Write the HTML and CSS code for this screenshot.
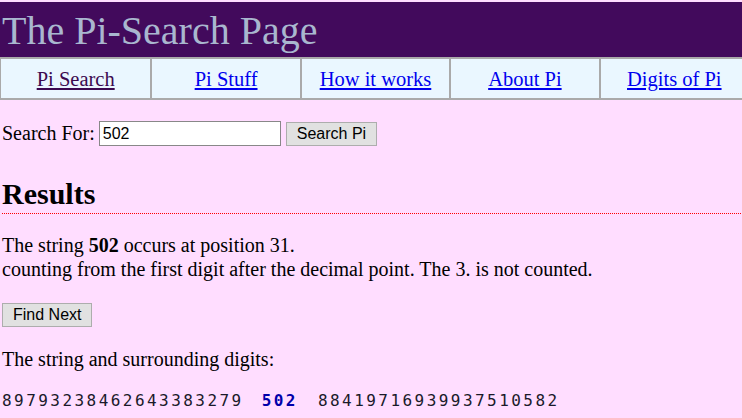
FILE: index.html
```html
<!doctype html>
<html lang="en">
<head>
<meta charset="UTF-8">
<title>The Pi-Search Page</title>
<link rel="stylesheet" href="styles.css">
</head>
<body>

<!-- header -->
<div class="banner">The Pi-Search Page</div>

<!-- nav -->
<div class="navbar">
  <a href="#" class="visited">Pi Search</a>
  <a href="#">Pi Stuff</a>
  <a href="#">How it works</a>
  <a href="#">About Pi</a>
  <a href="#">Digits of Pi</a>
</div>

<div class="page">
  <form class="search">
    <label for="q">Search For:</label>
    <input type="text" id="q" value="502">
    <button type="button">Search Pi</button>
  </form>

  <h2 class="results">Results</h2>

  <p class="found">The string <b>502</b> occurs at position 31.<br>
  counting from the first digit after the decimal point. The 3. is not counted.</p>

  <button type="button" class="next">Find Next</button>

  <p class="around">The string and surrounding digits:</p>

  <div class="digits">89793238462643383279<span class="hit">502</span>88419716939937510582</div>
</div>

</body>
</html>
```

FILE: styles.css
```css
html,body{margin:0;padding:0}
body{
  background:#ffddff;
  font-family:"Liberation Serif","Times New Roman",serif;
  font-size:20px;
  color:#000;
  padding-top:2px;
  overflow-x:hidden;
}

/* ---- header ------------------------------------------------- */
.banner{
  background:#420a5c;
  color:#a9b7cf;
  font-size:40px;
  height:55px;line-height:58px;
  padding-left:2px;
  white-space:nowrap;
}

/* ---- nav (table is a bit wider than the window) -------------- */
.navbar{
  display:grid;
  grid-template-columns:repeat(5,1fr);
  width:748px;box-sizing:border-box;
  background:#eaf7ff;
  border-top:2px solid #aaa;
  border-bottom:2px solid #aaa;
  border-left:1px solid #aaa;
  font-size:20.5px;
}
.navbar a{
  height:39px;line-height:41px;
  text-align:center;
  color:#0000ee;
  border-left:2px solid #aaa;
}
.navbar a:first-child{border-left:none}
.navbar a.visited{color:#3c0a50}

/* ---- content ------------------------------------------------ */
.page{padding:0 2px}
.search{margin:21px 0 0;display:flex;align-items:center;height:25px}
.search label{margin-right:4px}
.search input{
  width:174px;height:23px;padding:0 3px;margin:0 5px 0 0;
  border:1px solid #888;background:#fff;
  font:16px "Liberation Sans",Arial,sans-serif;
}
button{
  background:#e1e1e1;border:1px solid #adadad;
  font:16px "Liberation Sans",Arial,sans-serif;color:#000;
  padding:0 10px;height:24px;
}
.results{
  margin:30px -2px 0 0;
  font-size:30px;
  line-height:36px;
  background:linear-gradient(90deg,#f00 0 1px,transparent 1px 2px) left bottom/2px 1px repeat-x;
  padding-bottom:2px;
}
.found{margin:19px 0 0;line-height:24px}
.next{margin-top:22px;height:24px}
.around{margin:21px 0 0}
.digits{
  margin-top:20px;
  font-family:"DejaVu Sans Mono",monospace;
  font-size:16px;
  letter-spacing:2.45px;
  color:#1a1a2a;
  white-space:nowrap;
}
.hit{color:#0000aa;font-weight:bold;margin:0 20px 0 18px}
```
